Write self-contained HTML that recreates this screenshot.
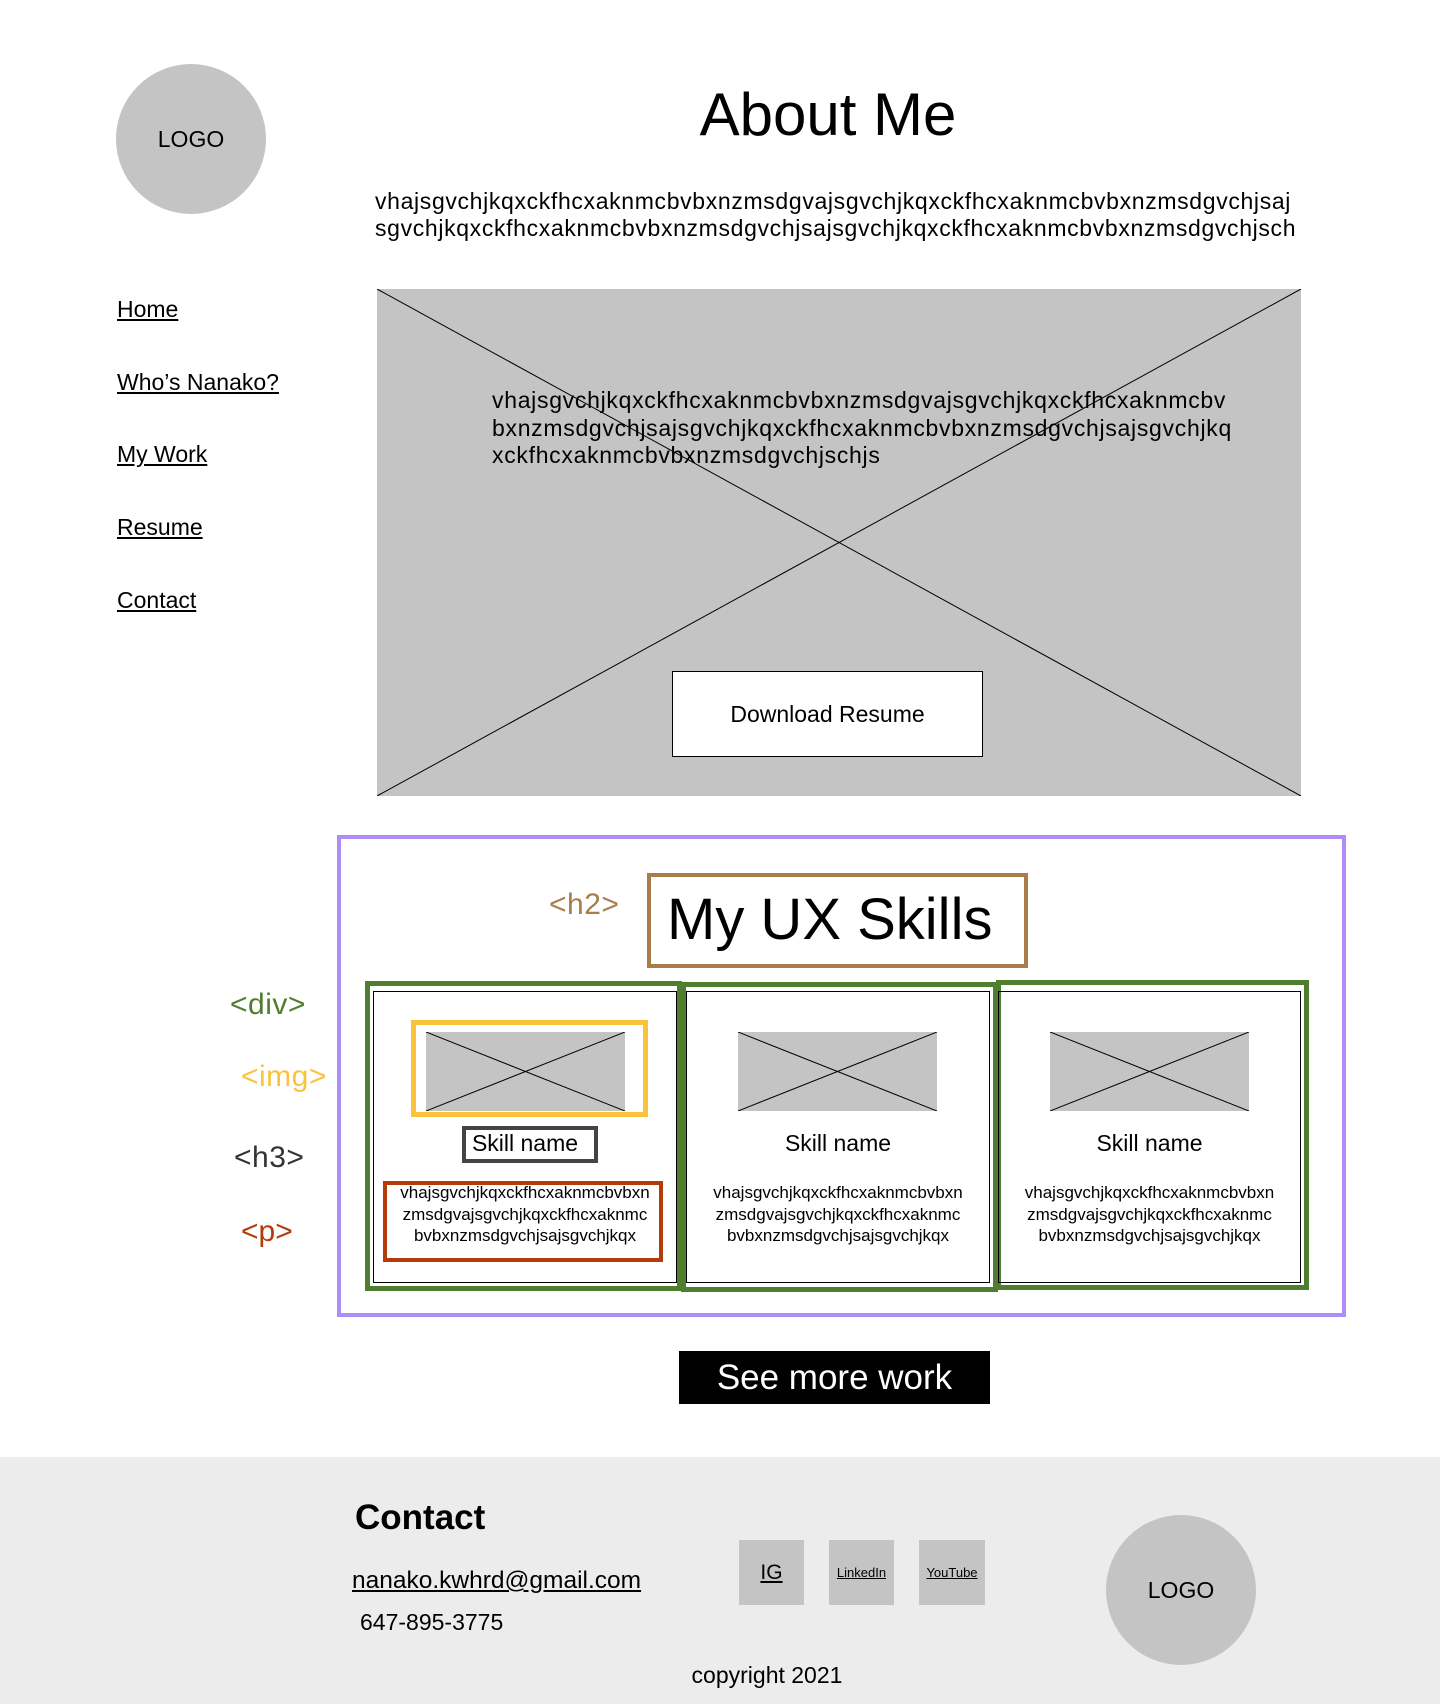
<!DOCTYPE html>
<html><head><meta charset="utf-8"><style>
*{margin:0;padding:0;box-sizing:border-box}
body{width:1440px;height:1704px;background:#fff;font-family:"Liberation Sans",sans-serif;color:#000;position:relative;overflow:hidden}
.a{position:absolute}
.circle{border-radius:50%;background:#c4c4c4;display:flex;align-items:center;justify-content:center;font-size:23px}
.nav{font-size:23px;text-decoration:underline;left:117px}
.lbl{font-size:30px;white-space:nowrap}
.ph{background:#c4c4c4}
.ct{text-align:center;white-space:nowrap}
</style></head><body>
<div class="a circle" style="left:116px;top:64px;width:150px;height:150px">LOGO</div>
<div class="a ct" style="left:578px;top:80px;width:500px;font-size:60px">About Me</div>
<div class="a" style="left:375px;top:188px;font-size:23px;line-height:27px;white-space:nowrap;letter-spacing:0.65px">vhajsgvchjkqxckfhcxaknmcbvbxnzmsdgvajsgvchjkqxckfhcxaknmcbvbxnzmsdgvchjsaj<br>sgvchjkqxckfhcxaknmcbvbxnzmsdgvchjsajsgvchjkqxckfhcxaknmcbvbxnzmsdgvchjsch</div>
<div class="a nav" style="top:296px">Home</div>
<div class="a nav" style="top:369px">Who’s Nanako?</div>
<div class="a nav" style="top:441px">My Work</div>
<div class="a nav" style="top:514px">Resume</div>
<div class="a nav" style="top:587px">Contact</div>

<div class="a ph" style="left:377px;top:289px;width:924px;height:507px"></div>
<svg class="a" style="left:377px;top:289px" width="924" height="507"><line x1="0" y1="0" x2="924" y2="507" stroke="#000" stroke-width="1"/><line x1="924" y1="0" x2="0" y2="507" stroke="#000" stroke-width="1"/></svg>
<div class="a" style="left:492px;top:387px;font-size:23px;line-height:27.5px;white-space:nowrap;letter-spacing:0.7px">vhajsgvchjkqxckfhcxaknmcbvbxnzmsdgvajsgvchjkqxckfhcxaknmcbv<br>bxnzmsdgvchjsajsgvchjkqxckfhcxaknmcbvbxnzmsdgvchjsajsgvchjkq<br>xckfhcxaknmcbvbxnzmsdgvchjschjs</div>
<div class="a ct" style="left:672px;top:671px;width:311px;height:86px;background:#fff;border:1px solid #000;font-size:23px;line-height:84px">Download Resume</div>

<div class="a" style="left:337px;top:835px;width:1009px;height:482px;border:4px solid #b08cf8"></div>
<div class="a lbl" style="left:549px;top:888px;color:#a87d4a;letter-spacing:0.5px">&lt;h2&gt;</div>
<div class="a" style="left:647px;top:873px;width:381px;height:95px;border:4px solid #a87d4a;font-size:58px;line-height:86px;padding-left:16px;white-space:nowrap">My UX Skills</div>

<div class="a lbl" style="left:230px;top:988px;color:#4e7e2e;letter-spacing:0.5px">&lt;div&gt;</div>
<div class="a lbl" style="left:241px;top:1060px;color:#f9c43c;letter-spacing:0.5px">&lt;img&gt;</div>
<div class="a lbl" style="left:234px;top:1141px;color:#333;letter-spacing:0.5px">&lt;h3&gt;</div>
<div class="a lbl" style="left:241px;top:1215px;color:#b33c0a">&lt;p&gt;</div>

<div class="a" style="left:365px;top:981px;width:317px;height:310px;border:5px solid #4e7e2e"></div>
<div class="a" style="left:681px;top:982px;width:317px;height:310px;border:5px solid #4e7e2e"></div>
<div class="a" style="left:996px;top:980px;width:313px;height:310px;border:5px solid #4e7e2e"></div>

<div class="a" style="left:373px;top:991px;width:304px;height:292px;border:1px solid #000"></div>
<div class="a" style="left:686px;top:991px;width:304px;height:292px;border:1px solid #000"></div>
<div class="a" style="left:998px;top:991px;width:303px;height:292px;border:1px solid #000"></div>

<div class="a" style="left:411px;top:1020px;width:237px;height:97px;border:5px solid #f9c43c"></div>

<div class="a ph" style="left:426px;top:1032px;width:199px;height:79px"></div>
<svg class="a" style="left:426px;top:1032px" width="199" height="79"><line x1="0" y1="0" x2="199" y2="79" stroke="#000"/><line x1="199" y1="0" x2="0" y2="79" stroke="#000"/></svg>
<div class="a ph" style="left:738px;top:1032px;width:199px;height:79px"></div>
<svg class="a" style="left:738px;top:1032px" width="199" height="79"><line x1="0" y1="0" x2="199" y2="79" stroke="#000"/><line x1="199" y1="0" x2="0" y2="79" stroke="#000"/></svg>
<div class="a ph" style="left:1050px;top:1032px;width:199px;height:79px"></div>
<svg class="a" style="left:1050px;top:1032px" width="199" height="79"><line x1="0" y1="0" x2="199" y2="79" stroke="#000"/><line x1="199" y1="0" x2="0" y2="79" stroke="#000"/></svg>

<div class="a" style="left:462px;top:1126px;width:136px;height:37px;border:4px solid #444"></div>
<div class="a ct" style="left:374px;top:1130px;width:302px;font-size:23px">Skill name</div>
<div class="a ct" style="left:686px;top:1130px;width:304px;font-size:23px">Skill name</div>
<div class="a ct" style="left:998px;top:1130px;width:303px;font-size:23px">Skill name</div>

<div class="a" style="left:383px;top:1181px;width:280px;height:81px;border:4px solid #b33c0a"></div>
<div class="a ct" style="left:374px;top:1182px;width:302px;font-size:17px;line-height:21.5px">vhajsgvchjkqxckfhcxaknmcbvbxn<br>zmsdgvajsgvchjkqxckfhcxaknmc<br>bvbxnzmsdgvchjsajsgvchjkqx</div>
<div class="a ct" style="left:686px;top:1182px;width:304px;font-size:17px;line-height:21.5px">vhajsgvchjkqxckfhcxaknmcbvbxn<br>zmsdgvajsgvchjkqxckfhcxaknmc<br>bvbxnzmsdgvchjsajsgvchjkqx</div>
<div class="a ct" style="left:998px;top:1182px;width:303px;font-size:17px;line-height:21.5px">vhajsgvchjkqxckfhcxaknmcbvbxn<br>zmsdgvajsgvchjkqxckfhcxaknmc<br>bvbxnzmsdgvchjsajsgvchjkqx</div>

<div class="a ct" style="left:679px;top:1351px;width:311px;height:53px;background:#000;color:#fff;font-size:35px;line-height:53px">See more work</div>

<div class="a" style="left:0;top:1457px;width:1440px;height:247px;background:#ececec"></div>
<div class="a" style="left:355px;top:1498px;font-size:35px;font-weight:bold">Contact</div>
<div class="a" style="left:352px;top:1567px;font-size:24.5px;text-decoration:underline">nanako.kwhrd@gmail.com</div>
<div class="a" style="left:360px;top:1609px;font-size:23px">647-895-3775</div>
<div class="a ct" style="left:739px;top:1540px;width:65px;height:65px;background:#c4c4c4;font-size:21px;line-height:65px;text-decoration:underline">IG</div>
<div class="a ct" style="left:829px;top:1540px;width:65px;height:65px;background:#c4c4c4;font-size:13px;line-height:65px;text-decoration:underline">LinkedIn</div>
<div class="a ct" style="left:919px;top:1540px;width:66px;height:65px;background:#c4c4c4;font-size:13px;line-height:65px;text-decoration:underline">YouTube</div>
<div class="a circle" style="left:1106px;top:1515px;width:150px;height:150px">LOGO</div>
<div class="a ct" style="left:617px;top:1662px;width:300px;font-size:23px">copyright 2021</div>
</body></html>
